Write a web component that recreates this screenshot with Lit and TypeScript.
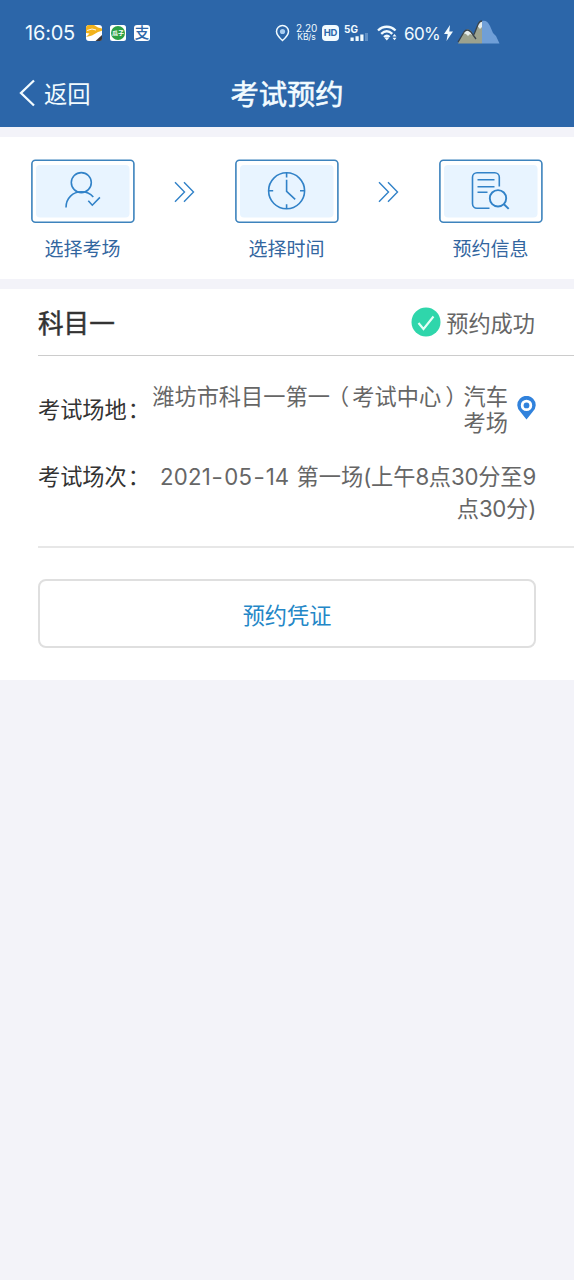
import { LitElement, html, css, svg } from "lit";
import { customElement } from "lit/decorators.js";

const personIcon = svg`
  <circle cx="50.300" cy="23.600" r="10" />
  <path d="M35 48.500C35 39 42 32.800 50.300 32.800c5 0 9 1.800 12 5.200" />
  <path d="M57.300 41.700l4 4.500 7.600-7.800" />`;

const clockIcon = svg`
  <circle cx="51.600" cy="31.800" r="18" />
  <path d="M51.600 13.800v4.600M51.600 45.200v4.600M33.600 31.800h4.600M65 31.800h4.600M51.600 20.700v11.600l8.600 8" />`;

const documentIcon = svg`
  <path d="M50.500 49.200H38a4.500 4.500 0 0 1-4.500-4.500V18.200a4.500 4.500 0 0 1 4.500-4.500h17.800a4.500 4.500 0 0 1 4.500 4.500v9.300" />
  <path d="M38.500 20.800h17M38.500 27.800h17M38.500 33.300h10" />
  <circle cx="59" cy="39.300" r="8.200" stroke-width="1.900" />
  <path d="M64.700 45l5 4.900" stroke-width="2" />`;

const steps = [
  { label: "选择考场", icon: personIcon },
  { label: "选择时间", icon: clockIcon },
  { label: "预约信息", icon: documentIcon },
];

@customElement("status-bar")
class StatusBar extends LitElement {
  static styles = css`
    :host {
      display: flex;
      align-items: center;
      height: 60px;
      padding-top: 5px;
      box-sizing: border-box;
      color: #f2fbff;
      font-family: Inter, "Noto Sans CJK SC", sans-serif;
    }
    svg { display: block; flex: none; }
    .time { margin-left: 25px; width: 61px; font-size: 20px; line-height: 24px; letter-spacing: -0.2px; }
    .apps { display: flex; gap: 8px; width: 189px; }
    .pin { margin-right: 6px; }
    .rate { width: 21px; margin-right: 5px; font-size: 10px; line-height: 9px; text-align: center; white-space: nowrap; }
    .rate .unit { font-size: 8.500px; letter-spacing: -0.1px; }
    .hd { width: 17px; height: 16px; border-radius: 4px; background: #f2fbff; color: #2c66a9; font-size: 9.500px; font-weight: 700; line-height: 16px; text-align: center; letter-spacing: -0.3px; margin-right: 5px; }
    .wifi { margin-left: 8px; }
    .percent { margin: 3px 5px 0 5px; width: 35px; font-size: 17px; line-height: 20px; letter-spacing: -0.6px; white-space: nowrap; }
    .pet { margin: 0 0 1px 4px; }
  `;

  render() {
    return html`
      <span class="time">16:05</span>
      <div class="apps">
        <svg width="16" height="16" viewBox="0 0 16 16">
          <rect width="16" height="16" rx="3" fill="#fff" />
          <path d="M0 3.500Q0 0 3 0h5l4 2.500 4 1v2.200L12 7 6 10.500l-6 1.500 3.500-3.500L0 8z" fill="#f2b21b" />
          <path d="M1 5.500l5-1.500 4 1" stroke="#fff" stroke-width="0.900" fill="none" />
          <path d="M9.500 16l6.500-6v4q0 2-2 2z" fill="#3d3738" />
        </svg>
        <svg width="16" height="16" viewBox="0 0 16 16">
          <rect width="16" height="16" rx="2.500" fill="#fff" />
          <circle cx="8" cy="8" r="7" fill="#2da044" />
          <text x="8" y="10.400" font-size="6" font-weight="700" text-anchor="middle" fill="#fff">瓜子</text>
        </svg>
        <svg width="16" height="16" viewBox="0 0 16 16">
          <rect width="16" height="16" rx="3" fill="#fff" />
          <text x="8" y="13.300" font-size="14.500" font-weight="500" text-anchor="middle" fill="#2c66a9">支</text>
        </svg>
      </div>
      <svg class="pin" width="15" height="18" viewBox="0 0 15 18">
        <path d="M7.500 16.500C4.500 13.800 1.500 11 1.500 7.400a6 6 0 0 1 12 0c0 3.600-3 6.400-6 9.100z" fill="none" stroke="#f2fbff" stroke-width="1.500" />
        <circle cx="7.500" cy="7.500" r="2.600" fill="#a9cdf0" />
      </svg>
      <div class="rate"><div>2.20</div><div class="unit">KB/s</div></div>
      <div class="hd">HD</div>
      <svg width="25" height="18" viewBox="0 0 25 18">
        <text x="0" y="8.500" font-size="10" font-weight="700" fill="#f2fbff">5G</text>
        <path d="M6.500 13.500h3.200v3.500H6.500zM11.500 12.300h3.200V17h-3.200zM16.300 10.500h3.200V17h-3.200z" fill="#f2fbff" />
        <path d="M21 9h3v8h-3z" fill="#5f8fc5" />
      </svg>
      <svg class="wifi" width="22" height="18" viewBox="0 0 22 18">
        <g fill="none" stroke="#f2fbff" stroke-width="2.300">
          <path d="M1 6.500c5-5 12.500-5 17.500 0M4.200 9.900c3.500-3.400 7.600-3.400 11.100 0M7 13c2-1.800 3.800-1.800 5.600 0" />
        </g>
        <path d="M7.600 14q2.200-1.300 4.400 0l-2.200 2.600zM15.500 12.500l2-2.500 2 2.500zM15.500 13.800l2 2.500 2-2.500z" fill="#f2fbff" />
      </svg>
      <span class="percent">60%</span>
      <svg width="9" height="16" viewBox="0 0 9 16"><path d="M6 0L0 9h3.700L2.500 16 9 6.500H5.300z" fill="#f2fbff" /></svg>
      <svg class="pet" width="43" height="26" viewBox="0 0 43 26">
        <path d="M1 24.500L7 13q3-5 7-1l3 4 4-11q1-3 4-3v22.500z" fill="#9ca28e" />
        <path d="M25 2q5-1.500 8 5l3 7 3 3 3.500 7.500H25z" fill="#709fd7" />
        <path d="M6 14q4-6 8-1l1.500 3-2.500-1-2 2-2-2zM20.500 7q1.500-5 4.500-5v6l-2 2z" fill="#e6edec" />
        <path d="M1 23L7 13q3-4 7 0l5 7M17 15.500l4-10q1.500-3.500 4-3.500" fill="none" stroke="#39434c" stroke-width="1.300" />
      </svg>
    `;
  }
}

@customElement("step-list")
class StepList extends LitElement {
  static styles = css`
    :host {
      display: flex;
      justify-content: space-between;
      height: 142px;
      box-sizing: border-box;
      padding: 22px 31px 0;
      background: #fff;
    }
    svg { display: block; fill: none; stroke: #3182c8; }
    .frame { stroke: #3d83bd; }
    .panel { fill: #e8f4ff; stroke: none; }
    .step { width: 104px; }
    .label { margin: 12px 1px 0 0; font-size: 19px; line-height: 26px; text-align: center; color: #33669f; white-space: nowrap; }
    .arrow { margin: 22px 1px 0 0; }
  `;

  render() {
    return steps.map(
      (step, i) => html`
        ${i ? html`<svg class="arrow" width="22" height="22" viewBox="0 0 22 22" stroke-width="1.400"><path d="M1 1.300l9.500 9.700L1 20.700M10 1.300l9.500 9.700-9.500 9.700" /></svg>` : ""}
        <div class="step">
          <svg width="104" height="64" viewBox="0 0 104 64" stroke-width="1.600">
            <rect class="frame" x="0.900" y="1.200" width="102" height="62" rx="3.500" />
            <rect class="panel" x="5" y="6" width="93.500" height="52.500" rx="4" />
            ${step.icon}
          </svg>
          <div class="label">${step.label}</div>
        </div>
      `
    );
  }
}

@customElement("app-root")
class AppRoot extends LitElement {
  static styles = css`
    :host {
      display: flex;
      flex-direction: column;
      gap: 10px;
      min-height: 1280px;
      background: #f3f3f9;
      font-family: "Noto Sans CJK SC", sans-serif;
      font-size: 22.200px;
      color: #666;
    }
    svg { display: block; flex: none; }
    .header { height: 127px; background: #2c66a9; color: #f2fbff; }
    .nav { display: grid; grid-template-columns: 1fr auto 1fr; align-items: center; height: 65px; }
    .back { display: flex; align-items: center; gap: 8px; padding-left: 19px; font-size: 23.300px; line-height: 34px; }
    .title { font-size: 28.300px; -webkit-text-stroke: 0.600px #f2fbff; line-height: 40px; }
    .card { height: 391px; box-sizing: border-box; padding-left: 38px; background: #fff; }
    .head { display: flex; align-items: center; justify-content: space-between; height: 66px; padding-right: 39px; border-bottom: 1px solid #ccc; }
    .subject { font-size: 25.600px; -webkit-text-stroke: 0.500px #333; line-height: 36px; color: #333; }
    .status { display: flex; align-items: center; gap: 5px; line-height: 32px; }
    .status svg, .subject { margin-bottom: 1px; }
    .details { box-sizing: border-box; height: 192px; padding: 26px 38px 0 0; border-bottom: 2px solid #e7e7e7; }
    .row { display: flex; justify-content: space-between; }
    .name { color: #333; white-space: nowrap; width: 111px; line-height: 32px; }
    .colon { padding-left: 1px; }
    .place { align-items: center; line-height: 26px; }
    .place .value { width: 360px; text-align: right; margin-right: 9px; letter-spacing: 0.050px; }
    .open { margin: 0 3px 0 -3px; }
    .close { margin: 0 -4px 0 4px; }
    .session { margin-top: 25px; line-height: 32px; }
    .session .value { text-align: right; white-space: nowrap; }
    .num { font-family: Inter, sans-serif; letter-spacing: -0.3px; line-height: 1; }
    .date { letter-spacing: 0.200px; margin-right: 2px; }
    .tail { letter-spacing: 0.100px; }
    .dash { display: inline-block; transform: scaleX(1.150); margin: 0 1.500px; }
    .button { display: flex; align-items: center; justify-content: center; box-sizing: border-box; width: 498px; height: 69px; margin-top: 31px; border: 2px solid #dfdfdf; border-radius: 8px; color: #2487c7; }
  `;

  render() {
    return html`
      <div class="header">
        <status-bar></status-bar>
        <div class="nav">
          <div class="back">
            <svg width="17" height="28" viewBox="0 0 17 28"><path d="M15 1.500L2 14l13 12.500" fill="none" stroke="#f2fbff" stroke-width="2.300" /></svg>
            返回
          </div>
          <div class="title">考试预约</div>
        </div>
      </div>
      <step-list></step-list>
      <div class="card">
        <div class="head">
          <div class="subject">科目一</div>
          <div class="status">
            <svg width="30" height="30" viewBox="0 0 30 30">
              <circle cx="15" cy="15" r="14.500" fill="#2fd6ab" />
              <path d="M7.500 16l5 6L22.500 9.500" fill="none" stroke="#e4fff6" stroke-width="2.100" />
            </svg>
            预约成功
          </div>
        </div>
        <div class="details">
          <div class="row place">
            <div class="name">考试场地<span class="colon">：</span></div>
            <div class="value">潍坊市科目一第一<span class="open">（</span>考试中心<span class="close">）</span>汽车<br />考场</div>
            <svg width="19" height="24" viewBox="0 0 19 24">
              <path fill="#3182dc" fill-rule="evenodd" d="M9.500 23.500L3.500 16A9.200 9.200 0 1 1 15.500 16zM9.500 3.700a5.700 5.700 0 1 0 0 11.400 5.700 5.700 0 0 0 0-11.400z" />
              <circle cx="9.500" cy="9.400" r="2.900" fill="#3182dc" />
            </svg>
          </div>
          <div class="row session">
            <div class="name">考试场次<span class="colon">：</span></div>
            <div class="value"><span class="num date">2021<span class="dash">-</span>05<span class="dash">-</span>14</span> <span class="tail">第一场</span><span class="num">(</span>上午<span class="num">8</span>点<span class="num">30</span>分至<span class="num">9</span><br />点<span class="num">30</span>分<span class="num">)</span></div>
          </div>
        </div>
        <div class="button">预约凭证</div>
      </div>
    `;
  }
}
